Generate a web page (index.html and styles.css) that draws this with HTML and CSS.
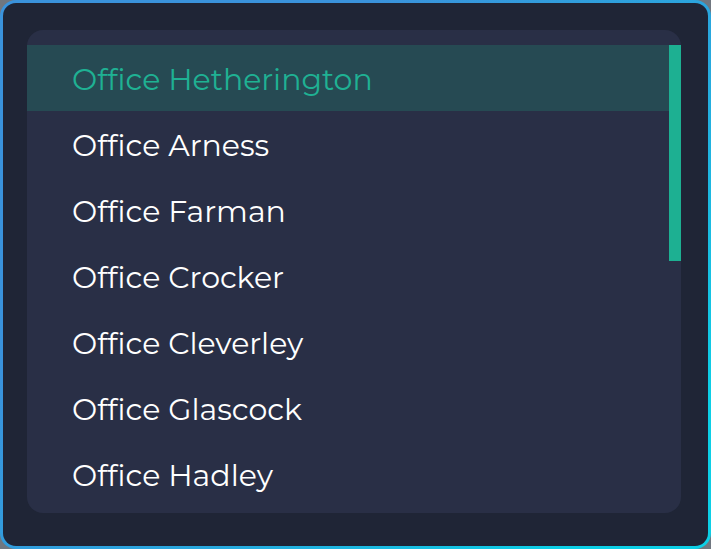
FILE: index.html
```html
<!DOCTYPE html>
<html lang="en">
<head>
<meta charset="utf-8">
<title>Offices</title>
<link rel="stylesheet" href="styles.css">
</head>
<body>
<main class="frame">
  <div class="panel">
    <div class="viewport">
      <ul class="list" role="listbox" aria-label="Office">
        <li class="option selected" role="option" aria-selected="true">Office Hetherington</li>
        <li class="option" role="option">Office Arness</li>
        <li class="option" role="option">Office Farman</li>
        <li class="option" role="option">Office Crocker</li>
        <li class="option" role="option">Office Cleverley</li>
        <li class="option" role="option">Office Glascock</li>
        <li class="option" role="option">Office Hadley</li>
      </ul>
      <div class="track"><div class="thumb"></div></div>
    </div>
  </div>
</main>
</body>
</html>
```
FILE: styles.css
```css
* { box-sizing: border-box; }
body {
  margin: 0;
  background: #707780;
  font-family: Montserrat, Inter, sans-serif;
}
.frame {
  min-height: 100vh;
  padding: 27px 27px 33px 24px;
  border: 3px solid transparent;
  border-radius: 16px;
  background:
    linear-gradient(#1f2536, #1f2536) padding-box,
    linear-gradient(135deg, #3a93dc 30%, #28a8de 60%, #0ccfe6 88%) border-box;
}
.panel {
  padding: 15px 0 6px;
  border-radius: 16px;
  background: #292f46;
}
.viewport { display: flex; }
.list {
  flex: 1;
  margin: 0;
  padding: 0;
  list-style: none;
}
.option {
  height: 66px;
  padding: 0 45px;
  color: #fff;
  font-size: 30px;
  line-height: 70px;
}
.selected {
  background: #264a53;
  color: #1fb193;
}
.track { width: 12px; }
.thumb {
  height: 216px;
  background: #1db092;
}
```
